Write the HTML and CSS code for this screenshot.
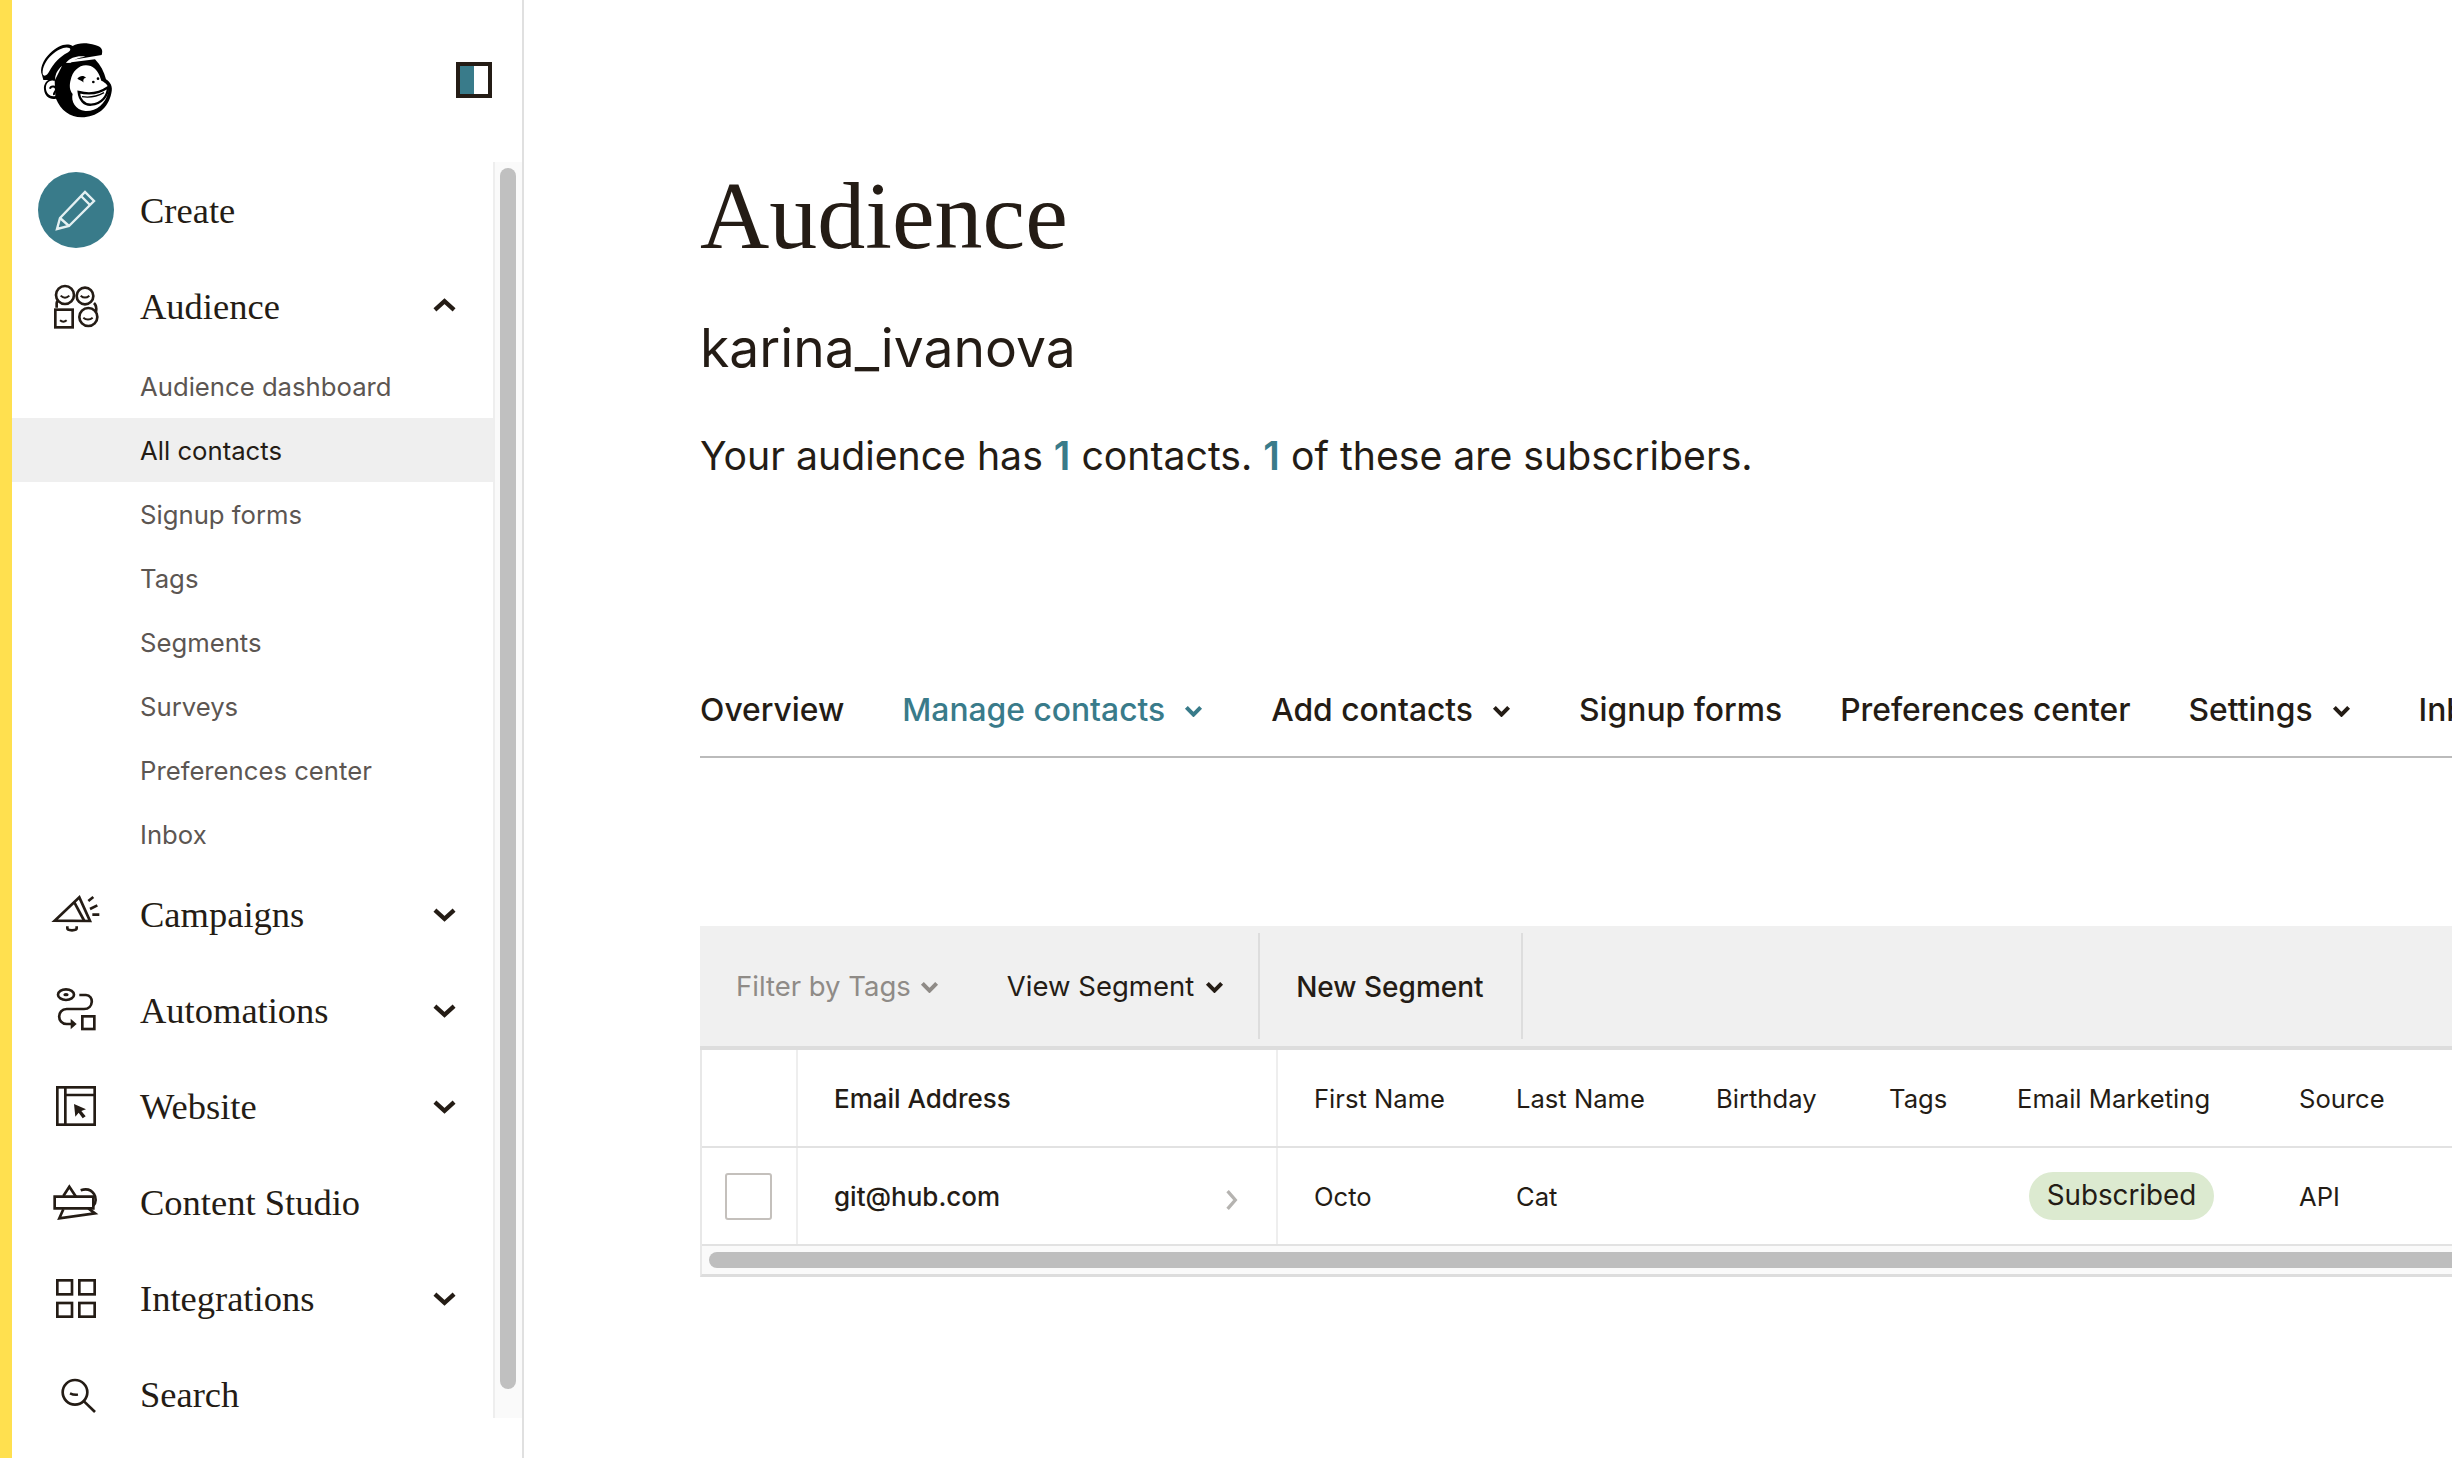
FILE: index.html
```html
<!DOCTYPE html>
<html>
  <head>
    <meta charset="UTF-8" />
    <title>Audience</title>
    <link rel="stylesheet" href="styles.css">
  </head>
  <body>
    <aside class="sidebar">
      <div class="sidebar-head">
        <svg class="logo" viewBox="0 0 300 300">
          <!-- head -->
          <path d="M40 150C50 150 60 150 75 150 75 120 100 100 125 90L215 75C220 60 215 50 195 45 170 38 145 38 128 48 110 38 85 45 60 70 38 90 28 120 36 135ZM75 150C55 142 40 160 42 178 44 200 60 210 78 206 92 240 120 262 155 262 200 262 235 235 244 190 250 170 240 155 228 148 222 125 212 105 195 88L100 100Z" fill="#000"/>
          <!-- brim -->
          <path d="M38 132C36 112 48 90 66 74 84 58 106 48 118 54 124 58 120 64 112 68 90 80 70 100 58 124 52 136 42 142 38 132Z" fill="#fff"/>
          <!-- ear -->
          <path d="M70 152c-14-2-24 10-22 26 2 14 14 24 28 20l-2-46Z" fill="#fff"/>
          <path d="M60 176c2-9 18-9 18 2 0 8-8 8-6 17" fill="none" stroke="#000" stroke-width="6"/>
          <!-- cap highlight -->
          <path d="M108 98c14-16 36-22 58-18-18 2-34 8-44 18Z" fill="#fff"/>
          <!-- face -->
          <path d="M122 150C128 118 155 98 182 108 198 114 208 132 214 152 228 158 240 170 234 188 226 222 198 245 166 243 136 240 122 214 128 192 118 180 118 165 122 150Z" fill="#fff"/>
          <path d="M142 146c8-10 20-10 26-2-8-2-10 10-6 14-6-6-14-8-20-12Z" fill="#000"/>
          <circle cx="190" cy="156" r="4" fill="#000"/>
          <circle cx="204" cy="146" r="4" fill="#000"/>
          <path d="M146 186c30 8 62 4 88-14 0 26-20 50-50 52-22 2-36-16-38-38Z" fill="#fff" stroke="#000" stroke-width="7"/>
          <path d="M156 200c24 4 44 0 66-12" fill="none" stroke="#000" stroke-width="4"/>
        </svg>
        <svg class="layout-toggle" viewBox="0 0 36 36">
          <rect x="2" y="2" width="32" height="32" fill="#fff" stroke="#241c15" stroke-width="4"/>
          <rect x="4" y="4" width="14" height="28" fill="#397b8a"/>
        </svg>
      </div>
      <div class="sidebar-scroll">
        <nav class="nav">
          <a class="nav-item">
            <span class="create-icon">
              <svg viewBox="0 0 44 44">
                <path d="M3 41l3-11L31 4l9 9-25 25-12 3Z" fill="none" stroke="#e4f0f2" stroke-width="2.400"/>
                <path d="M27 8l9 9M6 30l9 8" stroke="#e4f0f2" stroke-width="2.400"/>
              </svg>
            </span>
            <span class="nav-label">Create</span>
          </a>
          <a class="nav-item">
            <svg class="nav-icon" viewBox="0 0 210 210">
              <g fill="none" stroke="#241c15" stroke-width="8">
                <path d="M50 110V96c0-4 2-6 4-8M162 96c8 8 8 16 6 26"/>
                <circle cx="75" cy="72" r="27" fill="#fff"/>
                <circle cx="135" cy="75" r="25" fill="#fff"/>
                <circle cx="145" cy="138" r="27" fill="#fff"/>
                <rect x="46" y="116" width="52" height="53" fill="#fff"/>
              </g>
              <path d="M62 74c8 8 18 8 26 0M122 74c8 7 18 7 26 0M130 140c8 7 20 7 28 0M60 148c6 5 14 5 20 0" fill="none" stroke="#241c15" stroke-width="6"/>
            </svg>
            <span class="nav-label">Audience</span>
            <svg class="chevron up" viewBox="0 0 24 14"><path d="M2 12l10-9 10 9" fill="none" stroke="#241c15" stroke-width="4.500"/></svg>
          </a>
          <div class="sub-nav">
            <a class="sub-item">Audience dashboard</a>
            <a class="sub-item active">All contacts</a>
            <a class="sub-item">Signup forms</a>
            <a class="sub-item">Tags</a>
            <a class="sub-item">Segments</a>
            <a class="sub-item">Surveys</a>
            <a class="sub-item">Preferences center</a>
            <a class="sub-item">Inbox</a>
          </div>
          <a class="nav-item">
            <svg class="nav-icon" viewBox="0 0 210 210">
              <g fill="none" stroke="#241c15" stroke-width="8">
                <path d="M44 125l74-70 32 71Z"/>
                <path d="M103 70l30 56"/>
                <path d="M82 142v6c0 8 28 8 28 0v-6"/>
                <path d="M145 66l15-12M150 90l22-11M157 107h21"/>
              </g>
            </svg>
            <span class="nav-label">Campaigns</span>
            <svg class="chevron" viewBox="0 0 24 14"><path d="M2 2l10 9 10-9" fill="none" stroke="#241c15" stroke-width="4.500"/></svg>
          </a>
          <a class="nav-item">
            <svg class="nav-icon" viewBox="0 0 210 210">
              <g fill="none" stroke="#241c15" stroke-width="8">
                <ellipse cx="78" cy="59" rx="24" ry="16"/>
                <path d="M118 60h20c24 0 24 42-6 42H80c-30 0-30 45 0 45h16"/>
                <rect x="127" y="124" width="36" height="38"/>
              </g>
              <ellipse cx="78" cy="59" rx="8" ry="5" fill="#241c15"/>
              <path d="M92 131l18 16-18 16Z" fill="#241c15"/>
            </svg>
            <span class="nav-label">Automations</span>
            <svg class="chevron" viewBox="0 0 24 14"><path d="M2 2l10 9 10-9" fill="none" stroke="#241c15" stroke-width="4.500"/></svg>
          </a>
          <a class="nav-item">
            <svg class="nav-icon" viewBox="0 0 210 210">
              <g fill="none" stroke="#241c15" stroke-width="8">
                <rect x="52" y="49" width="112" height="112"/>
                <path d="M76 49v112M76 72h88"/>
              </g>
              <path d="M102 99l36 16-14 5 13 16-9 6-12-17-10 12Z" fill="#241c15"/>
            </svg>
            <span class="nav-label">Website</span>
            <svg class="chevron" viewBox="0 0 24 14"><path d="M2 2l10 9 10-9" fill="none" stroke="#241c15" stroke-width="4.500"/></svg>
          </a>
          <a class="nav-item">
            <svg class="nav-icon" viewBox="0 0 210 210">
              <g fill="none" stroke="#241c15" stroke-width="8">
                <path d="M44 89h116v35H44Z"/>
                <path d="M70 87l18-28 20 30M122 70c38-12 56 26 38 46"/>
                <path d="M70 127l-12 27 107-15-20-15"/>
              </g>
            </svg>
            <span class="nav-label">Content Studio</span>
          </a>
          <a class="nav-item">
            <svg class="nav-icon" viewBox="0 0 210 210">
              <g fill="none" stroke="#241c15" stroke-width="8">
                <rect x="52" y="52" width="44" height="42"/>
                <rect x="118" y="52" width="46" height="42"/>
                <rect x="52" y="120" width="44" height="41"/>
                <rect x="118" y="120" width="46" height="41"/>
              </g>
            </svg>
            <span class="nav-label">Integrations</span>
            <svg class="chevron" viewBox="0 0 24 14"><path d="M2 2l10 9 10-9" fill="none" stroke="#241c15" stroke-width="4.500"/></svg>
          </a>
          <a class="nav-item">
            <svg class="nav-icon" viewBox="0 0 210 210">
              <circle cx="105" cy="100" r="37" fill="none" stroke="#241c15" stroke-width="8"/>
              <path d="M132 127l33 32" stroke="#241c15" stroke-width="8"/>
              <path d="M90 103c8 4 16 5 24 4" fill="none" stroke="#241c15" stroke-width="7"/>
            </svg>
            <span class="nav-label">Search</span>
          </a>
        </nav>
        <div class="scrollbar"><div class="scrollbar-thumb"></div></div>
      </div>
    </aside>

    <main class="main">
      <h1 class="title">Audience</h1>
      <h2 class="audience-name">karina_ivanova</h2>
      <p class="summary">Your audience has <b>1</b> contacts. <b>1</b> of these are subscribers.</p>

      <div class="tabs">
        <a class="tab">Overview</a>
        <a class="tab current">Manage contacts<svg class="caret" viewBox="0 0 16 10"><path d="M2 2l6 6 6-6" fill="none" stroke="currentColor" stroke-width="3.400"/></svg></a>
        <a class="tab">Add contacts<svg class="caret" viewBox="0 0 16 10"><path d="M2 2l6 6 6-6" fill="none" stroke="currentColor" stroke-width="3.400"/></svg></a>
        <a class="tab">Signup forms</a>
        <a class="tab">Preferences center</a>
        <a class="tab">Settings<svg class="caret" viewBox="0 0 16 10"><path d="M2 2l6 6 6-6" fill="none" stroke="currentColor" stroke-width="3.400"/></svg></a>
        <a class="tab">Inbox</a>
      </div>

      <div class="toolbar">
        <a class="tool muted">Filter by Tags<svg class="caret" viewBox="0 0 16 10"><path d="M2 2l6 6 6-6" fill="none" stroke="currentColor" stroke-width="3.400"/></svg></a>
        <a class="tool view-segment">View Segment<svg class="caret" viewBox="0 0 16 10"><path d="M2 2l6 6 6-6" fill="none" stroke="currentColor" stroke-width="3.400"/></svg></a>
        <a class="tool new-segment">New Segment</a>
      </div>

      <div class="table-wrap">
        <table class="contacts">
          <colgroup>
            <col class="col-check"><col class="col-email"><col class="col-first"><col class="col-last">
            <col class="col-birthday"><col class="col-tags"><col class="col-marketing"><col>
          </colgroup>
          <tr>
            <th class="divided"></th>
            <th class="divided email-head">Email Address</th>
            <th class="first-name">First Name</th>
            <th>Last Name</th>
            <th>Birthday</th>
            <th>Tags</th>
            <th>Email Marketing</th>
            <th>Source</th>
          </tr>
          <tr>
            <td class="divided check-cell"><span class="checkbox"></span></td>
            <td class="divided email-cell">git@hub.com<svg class="row-arrow" viewBox="0 0 12 20"><path d="M2 2l7 8-7 8" fill="none" stroke="#b5b3b0" stroke-width="3"/></svg></td>
            <td class="first-name">Octo</td>
            <td>Cat</td>
            <td></td>
            <td></td>
            <td><span class="pill">Subscribed</span></td>
            <td>API</td>
          </tr>
        </table>
        <div class="h-scroll"><div class="h-scroll-thumb"></div></div>
      </div>
    </main>
  </body>
</html>
```

FILE: styles.css
```css
* {
  box-sizing: border-box;
}

html,
body {
  height: 100%;
}

body {
  margin: 0;
  display: flex;
  overflow: hidden;
  background: #fff;
  color: #241c15;
  font-family: "Inter", "Liberation Sans", sans-serif;
}

/* Sidebar */
.sidebar {
  width: 524px;
  height: 1458px;
  flex-shrink: 0;
  border-left: 12px solid #ffe04f;
  border-right: 2px solid #e0e0e0;
}

.sidebar-head {
  height: 162px;
  padding: 30px 30px 0 18px;
  display: flex;
  justify-content: space-between;
}

.logo {
  width: 100px;
  height: 100px;
}

.layout-toggle {
  width: 36px;
  height: 36px;
  margin-top: 32px;
}

.sidebar-scroll {
  display: flex;
  height: 1256px;
}

.nav {
  width: 481px;
  flex-shrink: 0;
}

.nav-item {
  height: 96px;
  padding-right: 37px;
  display: flex;
  align-items: center;
  font-family: "Liberation Serif", serif;
  font-size: 36.500px;
}

.nav-label {
  flex: 1;
  padding-top: 1px;
}

.nav-icon {
  width: 70px;
  height: 70px;
  margin: 0 30px 0 28px;
  flex-shrink: 0;
}

.create-icon {
  width: 76px;
  height: 76px;
  margin: 0 26px 0 26px;
  flex-shrink: 0;
  border-radius: 50%;
  background: #397b8a;
  display: flex;
  align-items: center;
  justify-content: center;
}

.create-icon svg {
  width: 44px;
  height: 44px;
}

.chevron {
  width: 23px;
  height: 14px;
  margin-top: 2px;
}

.chevron.up {
  margin: 0 0 3px;
}

.sub-item {
  display: block;
  height: 64px;
  padding: 2px 0 0 128px;
  line-height: 62px;
  font-size: 25.700px;
  color: #5c5652;
}

.sub-item.active {
  background: #efefef;
  color: #241c15;
}

.scrollbar {
  width: 29px;
  padding: 6px 6px 29px 5px;
  background: #fafafa;
  border-left: 2px solid #eeeeee;
}

.scrollbar-thumb {
  height: 100%;
  border-radius: 8px;
  background: #c0c0c0;
}

/* Main content */
.main {
  flex: 1;
  min-width: 0;
  padding: 160px 0 0 176px;
  overflow: hidden;
}

.title {
  margin: 0;
  font-family: "Liberation Serif", serif;
  font-size: 96px;
  font-weight: 400;
  line-height: 112px;
}

.audience-name {
  margin: 40px 0 0;
  font-size: 53.400px;
  font-weight: 400;
  line-height: 72px;
}

.summary {
  margin: 44px 0 0;
  font-size: 39.200px;
  line-height: 56px;
}

.summary b {
  color: #397b8a;
  font-weight: 600;
}

.tabs {
  margin-top: 199px;
  height: 75px;
  display: flex;
  gap: 58px;
  border-bottom: 2px solid #bbbbbb;
  white-space: nowrap;
  font-size: 31.800px;
  font-weight: 500;
}

.tab {
  line-height: 54px;
}

.tab.current {
  color: #397b8a;
}

.caret {
  width: 19px;
  height: 12px;
  margin: 0 10px 0 19px;
  vertical-align: 4px;
}

.toolbar {
  margin-top: 168px;
  height: 124px;
  display: flex;
  align-items: center;
  background: #f0f0f0;
  border-bottom: 4px solid #dddddd;
  white-space: nowrap;
  font-size: 27.500px;
}

.tool {
  height: 106px;
  display: flex;
  align-items: center;
}

.tool .caret {
  margin: 2px 0 0 11px;
}

.tool.muted {
  padding-left: 36px;
  color: #8f8b87;
}

.tool.muted .caret {
  margin-left: 9px;
}

.view-segment {
  margin-left: 68px;
  padding-right: 34px;
  border-right: 2px solid #dddddd;
}

.new-segment {
  padding: 2px 37px 0 36px;
  border-right: 2px solid #dddddd;
  font-size: 28px;
  font-weight: 500;
}

.table-wrap {
  border-left: 2px solid #e8e8e8;
  border-bottom: 3px solid #dddddd;
}

.contacts {
  width: 1750px;
  table-layout: fixed;
  border-collapse: collapse;
  font-size: 25.600px;
}

.col-check { width: 95px; }
.col-email { width: 480px; }
.col-first { width: 202px; }
.col-last { width: 200px; }
.col-birthday { width: 173px; }
.col-tags { width: 128px; }
.col-marketing { width: 282px; }

.contacts th,
.contacts td {
  height: 98px;
  padding: 0 0 0 37px;
  border-bottom: 2px solid #e2e2e2;
  text-align: left;
  font-weight: 400;
}

.contacts th {
  height: 97px;
}

.contacts .first-name {
  padding-left: 36px;
}

.contacts .email-head,
.contacts .email-cell {
  padding-left: 36px;
  font-size: 26px;
  font-weight: 500;
  position: relative;
}

.contacts .divided {
  border-right: 2px solid #eeeeee;
}

.contacts .check-cell {
  padding-left: 23px;
}

.checkbox {
  display: block;
  width: 47px;
  height: 47px;
  border: 2px solid #c4c0bc;
  border-radius: 3px;
}

.row-arrow {
  position: absolute;
  right: 37px;
  top: 41px;
  width: 14px;
  height: 22px;
}

.pill {
  display: inline-block;
  margin-left: 12px;
  width: 185px;
  height: 48px;
  border-radius: 24px;
  background: #dcead0;
  line-height: 46px;
  text-align: center;
  font-size: 27.800px;
}

.h-scroll {
  height: 28px;
  padding: 6px 0 6px 7px;
  background: #fafafa;
}

.h-scroll-thumb {
  height: 16px;
  border-radius: 8px 0 0 8px;
  background: #bebebe;
}
```
